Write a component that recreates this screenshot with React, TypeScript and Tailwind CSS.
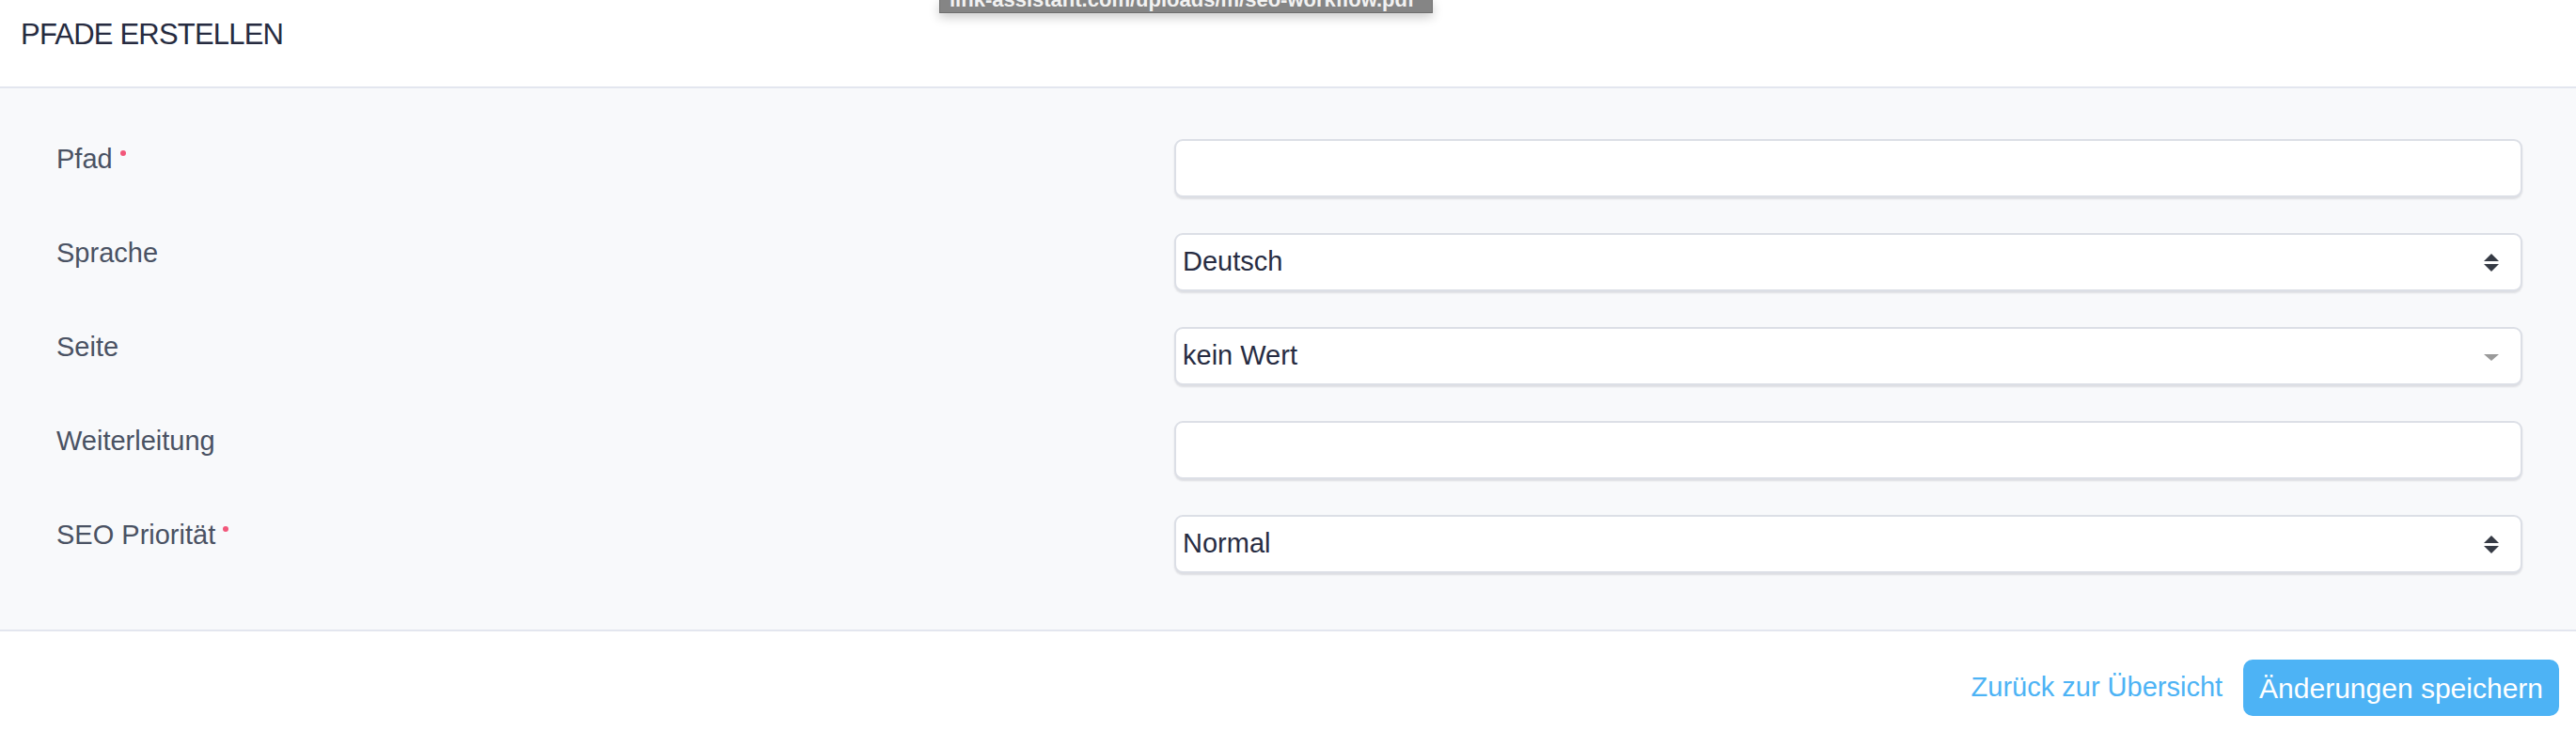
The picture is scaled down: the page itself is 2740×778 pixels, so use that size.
import type { ReactNode } from 'react';

type Field = {
  label: string;
  required?: boolean;
  kind: 'text' | 'native' | 'combo';
  value?: string;
};

const fields: Field[] = [
  { label: 'Pfad', required: true, kind: 'text' },
  { label: 'Sprache', kind: 'native', value: 'Deutsch' },
  { label: 'Seite', kind: 'combo', value: 'kein Wert' },
  { label: 'Weiterleitung', kind: 'text' },
  { label: 'SEO Priorität', required: true, kind: 'native', value: 'Normal' },
];

function UpDown() {
  return (
    <svg width="16" height="19" viewBox="0 0 16 19" className="shrink-0">
      <polygon points="8,0 16,8 0,8" fill="#363b45" />
      <polygon points="0,11 16,11 8,19" fill="#363b45" />
    </svg>
  );
}

function Caret() {
  return (
    <svg width="16" height="7" viewBox="0 0 16 7" className="mt-[2px] shrink-0">
      <polygon points="0,0 16,0 8,7" fill="#9a9a9a" />
    </svg>
  );
}

function Box({ children }: { children?: ReactNode }) {
  return (
    <div className="flex h-[62px] flex-1 items-center justify-between rounded-[9px] border-2 border-[#dcdfe6] bg-white pl-[7px] pr-[23px] shadow-[0_2px_2px_rgba(30,35,50,0.12)]">
      {children}
    </div>
  );
}

function FieldRow({ field }: { field: Field }) {
  return (
    <div className="flex items-start">
      <div className="flex w-[1189px] items-start text-[29px] leading-[42px] text-[#4a5263]">
        <span>{field.label}</span>
        {field.required && (
          <span className="ml-[8px] mt-[12px] h-[6px] w-[6px] rounded-full bg-[#f2577a]" />
        )}
      </div>
      <Box>
        {field.value && (
          <span className="text-[29px] text-[#272c42]">{field.value}</span>
        )}
        {field.kind === 'native' && <UpDown />}
        {field.kind === 'combo' && <Caret />}
      </Box>
    </div>
  );
}

export default function App() {
  return (
    <div className="relative min-h-screen bg-white font-['Liberation_Sans',Arial,sans-serif]">
      {/* browser link tooltip, cut off by the top of the window */}
      <div className="absolute left-[999px] top-0 h-[14px] w-[525px] overflow-hidden border border-t-0 border-[#6f6f6f] bg-[#858585] shadow-[0_4px_12px_rgba(0,0,0,0.22)]">
        <span className="absolute -top-[11px] left-[10px] whitespace-nowrap text-[22px] font-bold leading-[22px] text-[#f2f2f2]">
          link-assistant.com/uploads/m/seo-workflow.pdf
        </span>
      </div>

      <header className="h-[94px] border-b-2 border-[#e3e6ef] px-[22px] pt-[19px]">
        <h1 className="text-[31px] leading-[36px] tracking-[-0.8px] text-[#262b40]">
          PFADE ERSTELLEN
        </h1>
      </header>

      <section className="flex flex-col gap-[38px] border-b-2 border-[#e3e6ef] bg-[#f8f9fb] pb-[60px] pl-[60px] pr-[57px] pt-[54px]">
        {fields.map((field) => (
          <FieldRow key={field.label} field={field} />
        ))}
      </section>

      <footer className="flex items-center justify-end gap-[22px] pr-[18px] pt-[30px]">
        <a className="text-[29px] text-[#4db3f5]" href="#">
          Zurück zur Übersicht
        </a>
        <button
          type="button"
          className="h-[60px] rounded-[10px] bg-[#4db3f5] px-[17px] text-[30px] text-white"
        >
          Änderungen speichern
        </button>
      </footer>
    </div>
  );
}
